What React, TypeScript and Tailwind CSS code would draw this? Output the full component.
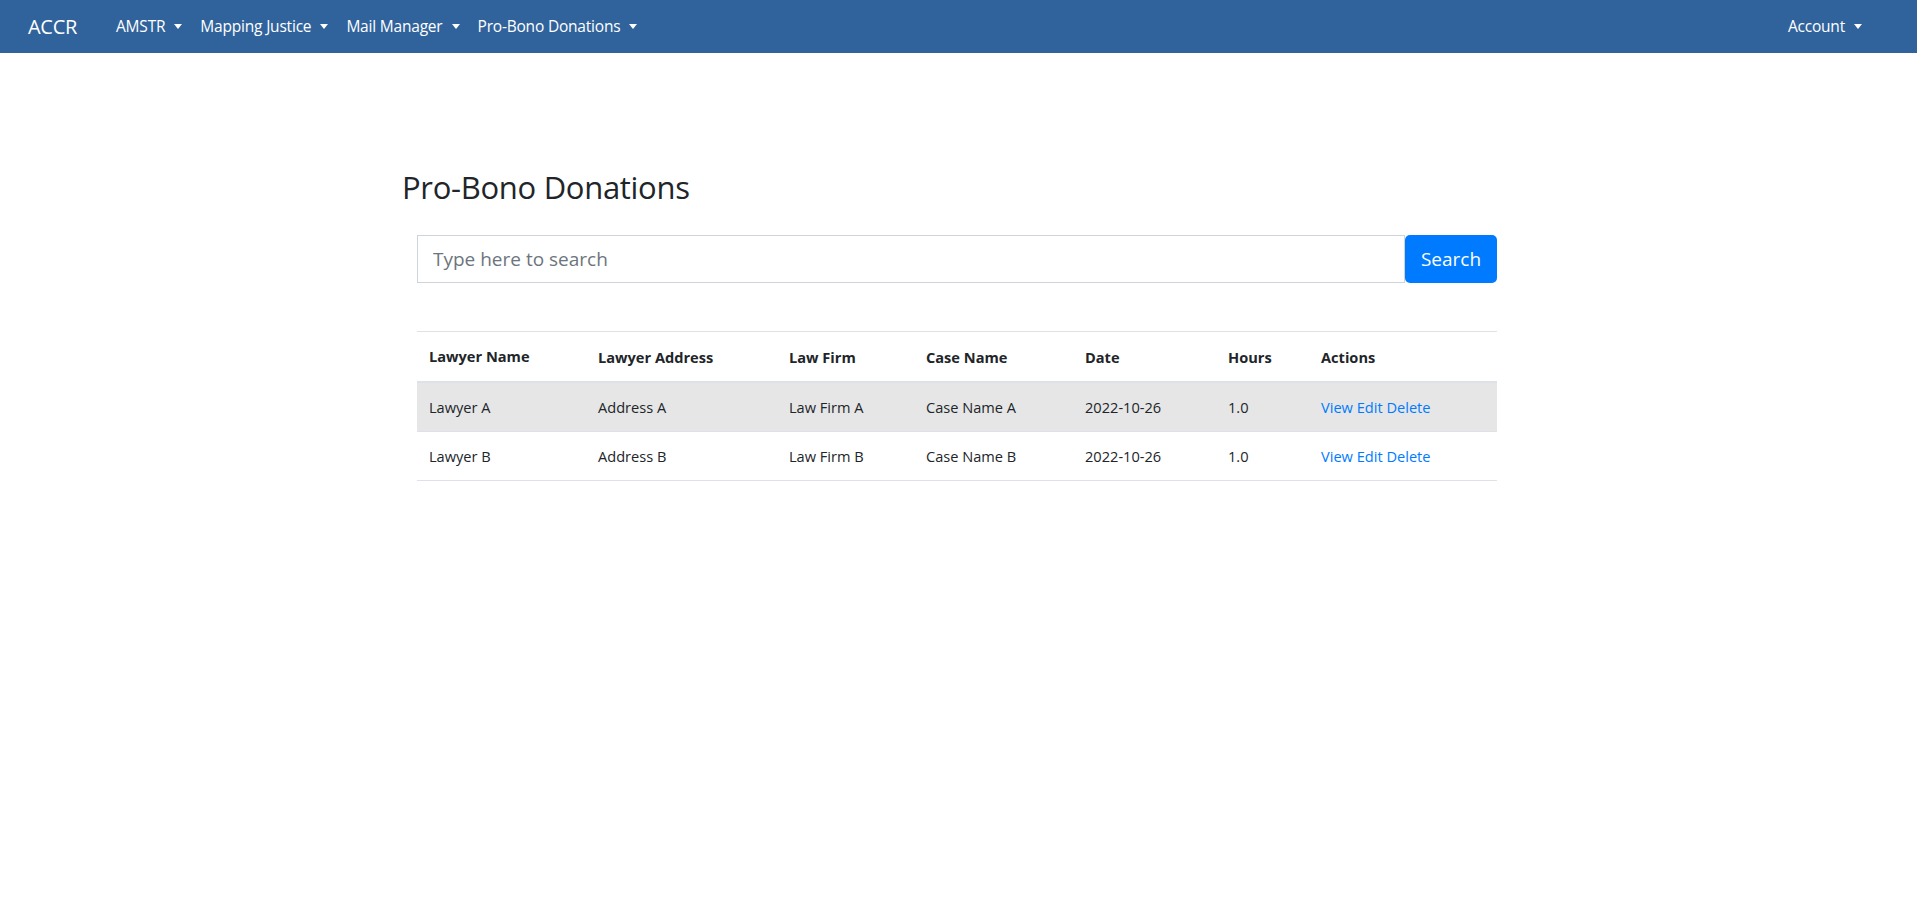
import React, { useState } from 'react';

const font = { fontFamily: '"Open Sans", "Noto Sans", "Liberation Sans", sans-serif' };

const navItems = ['AMSTR', 'Mapping Justice', 'Mail Manager', 'Pro-Bono Donations'];

const donations = [
  { name: 'Lawyer A', address: 'Address A', firm: 'Law Firm A', caseName: 'Case Name A', date: '2022-10-26', hours: '1.0' },
  { name: 'Lawyer B', address: 'Address B', firm: 'Law Firm B', caseName: 'Case Name B', date: '2022-10-26', hours: '1.0' },
];

const Caret = () => (
  <span className="ml-[9px] inline-block h-0 w-0 border-x-[4px] border-t-[5px] border-x-transparent border-t-white align-middle" />
);

const NavBar = () => (
  <nav className="flex h-[53px] items-center bg-[#30639c] pl-[28px] pr-[55px] text-white">
    <a href="#" className="mr-[39px] text-[20px] leading-none tracking-[-0.3px]">ACCR</a>
    <ul className="flex items-center gap-[18px]">
      {navItems.map((item) => (
        <li key={item} className="flex items-center text-[15.5px] tracking-[-0.2px]">
          {item}
          <Caret />
        </li>
      ))}
    </ul>
    <div className="ml-auto flex items-center text-[15.5px] tracking-[-0.2px]">
      Account
      <Caret />
    </div>
  </nav>
);

export default function App() {
  const [query, setQuery] = useState('');

  return (
    <div className="min-h-screen bg-white text-[#212529]" style={font}>
      <NavBar />
      <div className="flex justify-center pr-[3px]">
        <main className="w-[1110px] pt-[116px]">
          <h2 className="text-[31px] leading-[1.2] tracking-[-0.3px]">Pro-Bono Donations</h2>

          <div className="px-[15px]">
            <form className="mt-[29px] flex h-[48px]" onSubmit={(e) => e.preventDefault()}>
              <input
                value={query}
                onChange={(e) => setQuery(e.target.value)}
                placeholder="Type here to search"
                className="h-full flex-1 border border-[#ced4da] px-[15px] text-[19px] placeholder:text-[#6c757d] focus:outline-none"
              />
              <button type="submit" className="h-full w-[92px] rounded-[5px] bg-[#007bff] text-[19px] text-white">
                Search
              </button>
            </form>

            <table className="mt-[48px] w-full border-collapse text-left text-[14.6px] leading-[24px]">
              <thead>
                <tr className="border-t border-[#dee2e6]">
                  <th className="w-[169px] px-[12px] pt-[12px] pb-[13px] font-bold">Lawyer Name</th>
                  <th className="w-[191px] px-[12px] font-bold">Lawyer Address</th>
                  <th className="w-[137px] px-[12px] font-bold">Law Firm</th>
                  <th className="w-[159px] px-[12px] font-bold">Case Name</th>
                  <th className="w-[143px] px-[12px] font-bold">Date</th>
                  <th className="w-[93px] px-[12px] font-bold">Hours</th>
                  <th className="px-[12px] font-bold">Actions</th>
                </tr>
              </thead>
              <tbody>
                {donations.map((d, i) => (
                  <tr key={d.name} className={`border-[#dee2e6] ${i === 0 ? 'border-t-2 bg-[#e6e6e6]' : 'border-t bg-white'} ${i === donations.length - 1 ? 'border-b' : ''}`}>
                    <td className="px-[12px] py-[12px]">{d.name}</td>
                    <td className="px-[12px]">{d.address}</td>
                    <td className="px-[12px]">{d.firm}</td>
                    <td className="px-[12px]">{d.caseName}</td>
                    <td className="px-[12px]">{d.date}</td>
                    <td className="px-[12px]">{d.hours}</td>
                    <td className="px-[12px] text-[#007bff]">
                      <a href="#">View</a> <a href="#">Edit</a> <a href="#">Delete</a>
                    </td>
                  </tr>
                ))}
              </tbody>
            </table>
          </div>
        </main>
      </div>
    </div>
  );
}
